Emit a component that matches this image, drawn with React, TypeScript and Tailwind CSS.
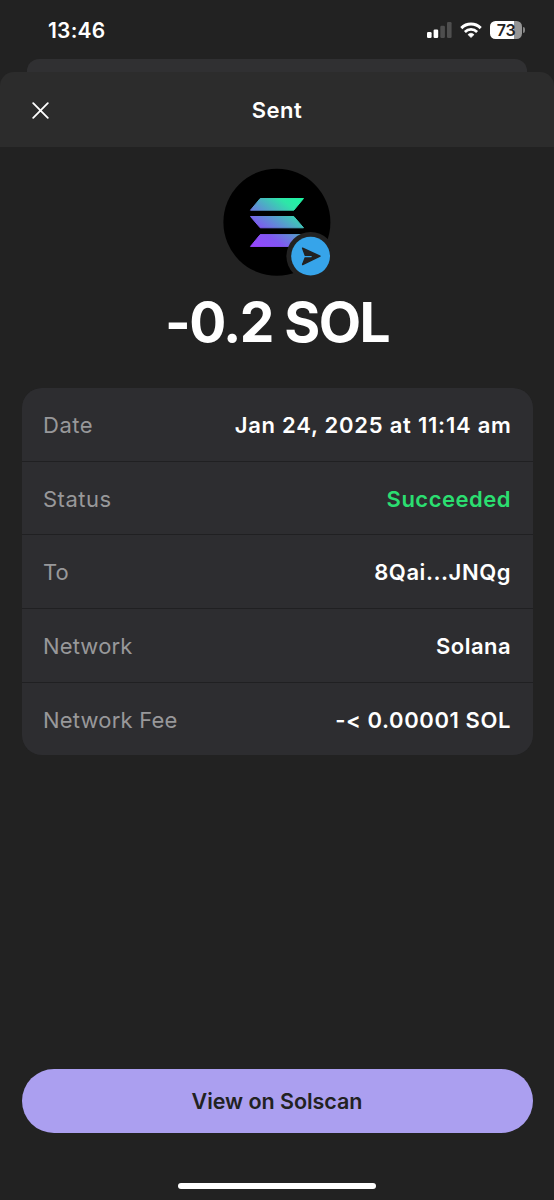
type DetailRow = {
  label: string
  value: string
  labelClass: string
  valueClass: string
}

const details: DetailRow[] = [
  {
    label: 'Date',
    value: 'Jan 24, 2025 at 11:14 am',
    labelClass: 'tracking-[0.5px]',
    valueClass: 'text-white tracking-[0.77px] -mr-[0.7px]',
  },
  {
    label: 'Status',
    value: 'Succeeded',
    labelClass: 'tracking-[0.5px]',
    valueClass: 'text-[#2bde70] tracking-[0.5px]',
  },
  {
    label: 'To',
    value: '8Qai...JNQg',
    labelClass: 'tracking-[0px]',
    valueClass: 'text-white tracking-[0.55px]',
  },
  {
    label: 'Network',
    value: 'Solana',
    labelClass: 'tracking-[0.15px]',
    valueClass: 'text-white tracking-[0.45px]',
  },
  {
    label: 'Network Fee',
    value: '-< 0.00001 SOL',
    labelClass: 'tracking-[0.2px]',
    valueClass: 'text-white tracking-[0.6px]',
  },
]

function SignalIcon() {
  return (
    <svg width="25" height="18" viewBox="0 0 25 18">
      <rect x="0" y="11" width="4.6" height="6" rx="1.2" fill="#fff" />
      <rect x="6.6" y="8.5" width="4.6" height="8.5" rx="1.2" fill="#fff" />
      <rect x="13.3" y="4.7" width="4.6" height="12.3" rx="1.2" fill="#4e4e4e" />
      <rect x="20" y="1" width="4.6" height="16" rx="1.2" fill="#4e4e4e" />
    </svg>
  )
}

function WifiIcon() {
  return (
    <svg width="22" height="17" viewBox="0 0 22 17" fill="none" stroke="#fff">
      <path d="M1.3 6.1 A13.8 13.8 0 0 1 20.7 6.1" strokeWidth="3" />
      <path d="M4.9 9.9 A8.8 8.8 0 0 1 17.1 9.9" strokeWidth="2.8" />
      <path
        d="M11 15.6 L7.9 12.6 A4.5 4.5 0 0 1 14.1 12.6 Z"
        fill="#fff"
        strokeWidth="0.6"
        strokeLinejoin="round"
      />
    </svg>
  )
}

function Battery() {
  return (
    <div className="flex items-center gap-[1px]">
      <div className="flex h-[18px] w-8 items-center justify-center rounded-[5.5px] bg-linear-to-r from-white from-75% to-[#959595] to-75% text-[16px] leading-none font-semibold tracking-[-0.4px] text-[#222]">
        73
      </div>
      <div className="h-[6px] w-[2px] rounded-r-full bg-[#858585]" />
    </div>
  )
}

function SolanaLogo() {
  return (
    <svg width="108" height="108" viewBox="0 0 108 108" className="block">
      <defs>
        <linearGradient
          id="sol"
          x1="76"
          y1="27"
          x2="34"
          y2="83"
          gradientUnits="userSpaceOnUse"
        >
          <stop offset="0" stopColor="#1df5a2" />
          <stop offset="0.2" stopColor="#2ee6a8" />
          <stop offset="0.5" stopColor="#5c92d2" />
          <stop offset="0.72" stopColor="#8057f2" />
          <stop offset="1" stopColor="#9945ff" />
        </linearGradient>
      </defs>
      <circle cx="53.9" cy="54.3" r="53.5" fill="#000" />
      <g fill="url(#sol)" stroke="url(#sol)" strokeWidth="1" strokeLinejoin="round">
        <path d="M37.2 30.5H80.5L70.8 42.2H27.5Z" />
        <path d="M27.5 48.5H70.8L80.5 59.8H37.2Z" />
        <path d="M37.2 66.6H80.5L70.8 78.4H27.5Z" />
      </g>
      <circle cx="87.6" cy="88.2" r="24.2" fill="#222" />
      <circle cx="87.6" cy="88.2" r="19.4" fill="#36a4ea" />
      <path
        d="M79.6 80.2L97 88.2L79.6 96.6L82.3 89.6H88.5V87.6H82.3Z"
        fill="#222"
        stroke="#222"
        strokeWidth="1.4"
        strokeLinejoin="round"
      />
      <path d="M81.8 88.6H88.2" stroke="#36a4ea" strokeWidth="1.2" strokeLinecap="round" />
    </svg>
  )
}

export default function App() {
  return (
    <div className="flex h-[1200px] w-[554px] flex-col overflow-hidden bg-[#222] font-['Inter',sans-serif] text-white">
      <div className="flex h-[59px] shrink-0 items-start justify-between pr-[29px] pl-12">
        <span className="mt-[18px] text-[21px] leading-[26px] font-semibold tracking-[0.2px]">13:46</span>
        <div className="mt-[21px] flex items-center gap-[8px]">
          <SignalIcon />
          <WifiIcon />
          <Battery />
        </div>
      </div>

      <div className="mx-[27px] h-[13px] shrink-0 rounded-t-xl bg-[#303032]" />

      <header className="grid h-[75px] shrink-0 grid-cols-[1fr_auto_1fr] items-center rounded-t-[14px] bg-[#2c2c2c] px-8">
        <button aria-label="Close" className="w-fit">
          <svg width="17" height="17" viewBox="0 0 17 17" className="mt-[2px]">
            <path
              d="M1.2 1.2L15.8 15.8M15.8 1.2L1.2 15.8"
              stroke="#fff"
              strokeWidth="1.8"
              strokeLinecap="round"
            />
          </svg>
        </button>
        <h1 className="text-[22px] leading-7 font-semibold tracking-[0.5px]">Sent</h1>
      </header>

      <main className="flex grow flex-col items-center px-[21.5px] pt-[21px]">
        <SolanaLogo />
        <p className="mt-[12px] text-[55px] leading-[68px] font-bold tracking-[-1.6px] whitespace-nowrap">
          -0.2 SOL
        </p>

        <dl className="mt-[32px] flex w-full flex-col gap-px overflow-hidden rounded-[20px] bg-[#202022]">
          {details.map((row) => (
            <div
              key={row.label}
              className="flex h-[72.7px] items-center justify-between bg-[#2d2d30] px-[21.5px] pt-[2px] text-[22px] whitespace-nowrap"
            >
              <dt className={`text-[#98989a] ${row.labelClass}`}>{row.label}</dt>
              <dd className={`font-semibold ${row.valueClass}`}>{row.value}</dd>
            </div>
          ))}
        </dl>

        <button className="mt-auto h-16 w-full rounded-full bg-[#ab9ff0] text-[21.5px] font-semibold tracking-[-0.05px] text-[#222]">
          View on Solscan
        </button>
        <div className="mt-[50px] mb-[11px] h-[6px] w-[198px] shrink-0 rounded-full bg-white" />
      </main>
    </div>
  )
}
